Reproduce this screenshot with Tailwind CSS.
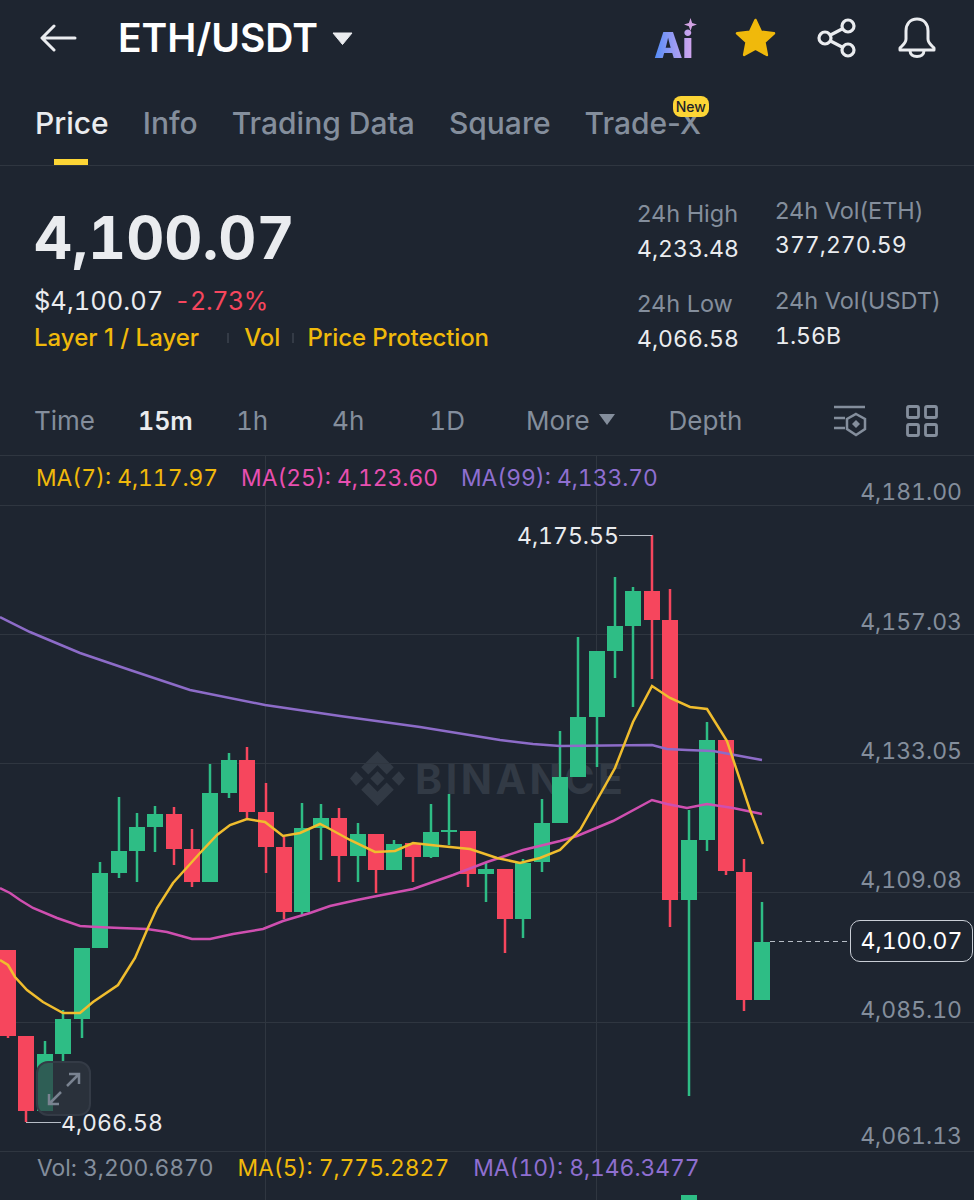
<!doctype html>
<html lang="en">
  <head>
    <meta charset="UTF-8" />
    <meta name="viewport" content="width=device-width, initial-scale=1.0" />
    <title>ETH/USDT</title>
    <script src="https://cdn.jsdelivr.net/npm/@tailwindcss/browser@4"></script>
  </head>
  <body class="bg-[#1e2530]">
    <div class="w-[974px] h-[1200px] overflow-hidden bg-[#1e2530] font-['Inter',sans-serif] text-[#848e9c]">
      <!-- top bar -->
      <header class="h-[75px] flex items-center pl-[40px] pr-[37px]">
        <svg class="w-[37px] h-[30px]" viewBox="0 0 37 30" fill="none" stroke="#eaecef" stroke-width="3" stroke-linecap="round" stroke-linejoin="round">
          <path d="M35 15H3M14 3L2 15l12 12" />
        </svg>
        <h1 class="ml-[41px] text-[39px] leading-[44px] font-semibold text-white tabular-nums">ETH/USDT</h1>
        <svg class="ml-[14px] mt-[1px] w-[21px] h-[13px]" viewBox="0 0 21 13" fill="#eaecef"><path d="M1 1h19l-9.500 11.500z" stroke="#eaecef" stroke-linejoin="round" /></svg>
        <div class="ml-auto relative w-[41px] h-[40px] mt-[6px]">
          <span class="absolute left-[-1px] bottom-0 text-[36px] leading-[32px] font-black bg-gradient-to-r from-[#4f8cf7] to-[#d4a5ee] bg-clip-text text-transparent">Ai</span>
          <svg class="absolute right-[-1px] top-[-3px] w-[13px] h-[13px]" viewBox="0 0 12 12" fill="#d3a3e4"><path d="M6 0l1.500 4.500L12 6 7.500 7.500 6 12 4.500 7.500 0 6l4.500-1.500z" /></svg>
        </div>
        <svg class="ml-[39px] w-[41px] h-[39px]" viewBox="0 0 41 39" fill="#f0b90b" stroke="#f0b90b" stroke-width="2.500" stroke-linejoin="round">
          <path d="M20.500 2l5.500 11.700 13 1.600-9.600 8.800 2.500 12.900-11.400-6.300-11.400 6.300 2.500-12.900-9.600-8.800 13-1.600z" />
        </svg>
        <svg class="ml-[41px] w-[40px] h-[40px]" viewBox="0 0 40 40" fill="none" stroke="#eaecef" stroke-width="3.200">
          <circle cx="31" cy="8" r="6" /><circle cx="8" cy="20" r="6" /><circle cx="31" cy="32" r="6" />
          <path d="M13.500 17L26 10.500M13.500 23L26 29.500" />
        </svg>
        <svg class="ml-[40px] w-[40px] h-[41px]" viewBox="0 0 40 41" fill="none" stroke="#eaecef" stroke-width="3" stroke-linecap="round" stroke-linejoin="round">
          <path d="M20 2c-7 0-11 5-11 12v8c0 4-3 6-6 9v2h34v-2c-3-3-6-5-6-9v-8c0-7-4-12-11-12z" />
          <path d="M13 33.500c0 4 3 6 7 6s7-2 7-6" />
        </svg>
      </header>

      <!-- tabs -->
      <nav class="h-[91px] border-b border-[#2f3640] pl-[35px] relative flex gap-[34px] pt-[29px] text-[30px] leading-[38px] font-medium text-[#848e9c]">
        <a class="text-[#eaecef]">Price</a>
        <a>Info</a>
        <a>Trading Data</a>
        <a>Square</a>
        <a class="relative">Trade-X
          <span class="absolute right-[-8px] top-[-8px] h-[21px] px-[3px] rounded-[8px] bg-[#fcd535] text-[#1e2329] text-[14px] leading-[21px]">New</span>
        </a>
        <span class="absolute left-[54px] bottom-0 w-[34px] h-[6px] bg-[#fcd535]"></span>
      </nav>

      <!-- price summary -->
      <section class="h-[219px] flex justify-between pl-[34px]">
        <div>
          <div class="mt-[38px] text-[59px] leading-[68px] font-bold text-[#eaecef] tabular-nums">4,100.07</div>
          <div class="mt-[14px] flex gap-[11px] text-[25.500px] leading-[30px] tabular-nums">
            <span class="text-[#eaecef]">$4,100.07</span>
            <span class="text-[#f6465d] text-[25px] tracking-[-0.4px]">-2.73%</span>
          </div>
          <div class="mt-[7px] flex items-center text-[24px] leading-[30px] font-medium text-[#f0b90b]">
            <span>Layer 1 / Layer</span>
            <span class="ml-[28px] mr-[15px] w-[2px] h-[10px] bg-[#343b46]"></span>
            <span>Vol</span>
            <span class="ml-[12px] mr-[13px] w-[2px] h-[10px] bg-[#343b46]"></span>
            <span class="tracking-[-0.1px]">Price Protection</span>
          </div>
        </div>
        <div class="w-[337px] flex text-[23.500px] leading-[30px]">
          <div class="w-[138px] pt-[33px]">
            <div>24h High</div>
            <div class="mt-[5px] text-[23px] text-[#eaecef] tabular-nums">4,233.48</div>
            <div class="mt-[25px]">24h Low</div>
            <div class="mt-[5px] text-[23px] text-[#eaecef] tabular-nums">4,066.58</div>
          </div>
          <div class="pt-[30px]">
            <div>24h Vol(ETH)</div>
            <div class="mt-[4px] text-[23px] text-[#eaecef] tabular-nums">377,270.59</div>
            <div class="mt-[26px]">24h Vol(USDT)</div>
            <div class="mt-[5px] text-[23px] text-[#eaecef] tabular-nums">1.56B</div>
          </div>
        </div>
      </section>

      <!-- intervals -->
      <div class="h-[70px] flex items-center pl-[34px] pt-[2px] text-[26px] leading-[32px] tabular-nums">
        <span>Time</span>
        <span class="ml-[43px] text-[25px] font-semibold text-[#eaecef]">15m</span>
        <span class="ml-[43px]">1h</span>
        <span class="ml-[64px]">4h</span>
        <span class="ml-[65px]">1D</span>
        <span class="ml-[61px]">More</span>
        <svg class="ml-[9px] mb-[3px] w-[16px] h-[11px]" viewBox="0 0 16 11" fill="#848e9c"><path d="M0 0h16l-8 11z" /></svg>
        <span class="ml-[54px]">Depth</span>
        <svg class="ml-[92px] w-[33px] h-[32px]" viewBox="0 0 33 32" fill="none" stroke="#848e9c" stroke-width="2.500">
          <path d="M0 2h31M0 13h11M0 23h11" />
          <path d="M22 9l9 5v10l-9 6-9-6V14z" />
          <path d="M22 15l4 4-4 4-4-4z" fill="#848e9c" stroke="none" />
        </svg>
        <svg class="ml-[39px] w-[32px] h-[32px]" viewBox="0 0 32 32" fill="none" stroke="#848e9c" stroke-width="2.800">
          <rect x="1.500" y="1.500" width="11" height="11" rx="1.500" /><rect x="19.500" y="1.500" width="11" height="11" rx="1.500" />
          <rect x="1.500" y="19.500" width="11" height="11" rx="1.500" /><rect x="19.500" y="19.500" width="11" height="11" rx="1.500" />
        </svg>
      </div>

      <!-- chart -->
      <div class="relative h-[745px] border-t border-[#2f3640] flex flex-col tabular-nums">
        <div class="absolute left-[350px] top-[295px] flex items-center gap-[10px]">
          <svg class="w-[55px] h-[55px]" viewBox="0 0 54 54" fill="#323a45">
            <path d="M27 0l16 16-7 7-9-9-9 9-7-7zM6 20l7 7-7 7-6-7zM48 20l6 7-6 7-7-7zM27 20l7 7-7 7-7-7zM11 38l7-7 9 9 9-9 7 7-16 16z" />
          </svg>
          <span class="text-[41px] leading-[50px] font-bold tracking-[3.500px] text-[#323a45]">BINANCE</span>
        </div>

        <svg id="chart" class="absolute left-0 top-0 w-[974px] h-[744px]" viewBox="0 456 974 744" fill="none"></svg>

        <!-- legend over the price pane -->
        <div class="relative h-[49px] flex items-center pl-[36px] pb-[4px] gap-[23px] text-[22.800px]">
          <span class="text-[#f0b90b]">MA(7): 4,117.97</span>
          <span class="text-[#e84fb0]">MA(25): 4,123.60</span>
          <span class="text-[#8f6fd0]">MA(99): 4,133.70</span>
        </div>
        <div class="relative flex-1"></div>
        <div class="relative h-[49px] flex items-center pl-[37px] pb-[14px] gap-[24px] text-[22.800px]">
          <span>Vol: 3,200.6870</span>
          <span class="text-[#f0b90b]">MA(5): 7,775.2827</span>
          <span class="text-[#8f6fd0]">MA(10): 8,146.3477</span>
        </div>

        <!-- price axis -->
        <span class="absolute right-[12px] top-[21px] text-[23px] leading-[30px]">4,181.00</span>
        <span class="absolute right-[12px] top-[151px] text-[23px] leading-[30px]">4,157.03</span>
        <span class="absolute right-[12px] top-[280px] text-[23px] leading-[30px]">4,133.05</span>
        <span class="absolute right-[12px] top-[409px] text-[23px] leading-[30px]">4,109.08</span>
        <span class="absolute right-[12px] top-[539px] text-[23px] leading-[30px]">4,085.10</span>
        <span class="absolute right-[12px] top-[665px] text-[23px] leading-[30px]">4,061.13</span>
        <span class="absolute left-[850px] top-[464px] w-[123px] h-[42px] rounded-[10px] border border-[#c9ced6] bg-[#1e2530] text-center text-[23px] leading-[40px] text-white">4,100.07</span>

        <!-- high / low marks -->
        <span class="absolute left-[517px] top-[65px] text-[23px] leading-[30px] text-[#eaecef]">4,175.55</span>
        <span class="absolute left-[61px] top-[652px] text-[23px] leading-[30px] text-[#eaecef]">4,066.58</span>

        <button class="absolute left-[36px] top-[605px] w-[55px] h-[55px] rounded-[12px] border-2 border-[#343b46] bg-[#2f3640]/70 flex items-center justify-center">
          <svg class="w-[34px] h-[34px]" viewBox="0 0 34 34" fill="none" stroke="#7a8391" stroke-width="2.500">
            <path d="M20 14L32 2M22 2h10v10M14 20L2 32M2 22v10h10" />
          </svg>
        </button>
      </div>
    </div>

    <script>
      // [center x, high, body top, body bottom, low, green?] in page pixels
      const candles = [
        [8, 950, 950, 1036, 1038, 0], [26, 1036, 1036, 1111, 1122, 0], [45, 1041, 1054, 1111, 1111, 1],
        [63, 1010, 1019, 1054, 1062, 1], [82, 948, 948, 1019, 1038, 1], [100, 862, 873, 948, 948, 1],
        [119, 797, 851, 873, 878, 1], [137, 813, 827, 851, 882, 1], [155, 806, 814, 827, 852, 1],
        [174, 807, 814, 849, 865, 0], [192, 829, 849, 882, 887, 0], [210, 764, 793, 882, 882, 1],
        [229, 753, 760, 793, 798, 1], [247, 747, 760, 812, 820, 0], [266, 783, 812, 847, 873, 0],
        [284, 837, 847, 912, 919, 0], [302, 803, 828, 912, 915, 1], [321, 804, 818, 828, 860, 1],
        [339, 808, 818, 856, 882, 0], [358, 823, 834, 856, 882, 1], [376, 834, 834, 870, 893, 0],
        [394, 840, 844, 870, 870, 1], [413, 843, 843, 857, 882, 0], [431, 804, 832, 857, 858, 1],
        [449, 794, 830, 832, 845, 1], [468, 831, 831, 874, 887, 0], [486, 863, 869, 874, 902, 1],
        [505, 869, 869, 919, 953, 0], [523, 859, 863, 919, 938, 1], [542, 799, 823, 862, 872, 1],
        [560, 731, 777, 823, 823, 1], [578, 637, 717, 777, 777, 1], [597, 651, 651, 717, 767, 1],
        [615, 577, 626, 651, 678, 1], [633, 587, 591, 626, 707, 1], [652, 535, 591, 620, 679, 0],
        [670, 589, 620, 900, 927, 0], [689, 810, 840, 900, 1096, 1], [707, 722, 740, 840, 851, 1],
        [726, 740, 740, 871, 875, 0], [744, 859, 872, 1000, 1011, 0], [762, 902, 942, 1000, 1000, 1],
      ];

      const ma7 = "0,960 8,965 15,977 27,990 43,1002 63,1013 80,1013 93,1002 118,985 135,958 147,930 157,908 173,883 200,853 217,835 230,825 247,819 265,822 283,836 300,833 320,824 330,829 350,840 375,852 395,851 413,843 440,846 470,849 497,858 520,863 540,858 560,850 580,830 615,768 633,722 652,686 670,698 690,707 707,709 727,741 750,810 763,844";
      const ma25 = "0,888 10,893 20,900 33,908 57,918 80,926 97,927 120,928 147,929 167,932 192,939 210,939 233,934 263,929 283,921 310,913 330,906 357,900 377,896 413,889 453,875 487,862 523,850 560,841 577,836 613,821 652,800 667,804 687,808 707,804 733,808 762,814";
      const ma99 = "0,617 30,632 80,653 130,670 190,690 265,705 340,716 420,727 500,740 533,744 560,746 652,745 667,749 687,750 713,751 762,760";

      let svg = "";
      for (const y of [505, 634, 763, 892, 1022, 1151]) svg += `<path d="M0 ${y + 0.5}H974" stroke="#2f3640" />`;
      for (const x of [265, 596]) svg += `<path d="M${x + 0.5} 456V1200" stroke="#2f3640" />`;

      for (const [x, high, top, bottom, low, up] of candles) {
        const color = up ? "#2ebd85" : "#f6465d";
        svg += `<path d="M${x} ${high}V${low}" stroke="${color}" stroke-width="2.500" />`;
        svg += `<rect x="${x - 8}" y="${top}" width="16" height="${bottom - top}" fill="${color}" />`;
      }

      svg += `<rect x="681" y="1195" width="16" height="5" fill="#2ebd85" />`;
      svg += `<polyline points="${ma99}" stroke="#8d6cc8" stroke-width="2.500" />`;
      svg += `<polyline points="${ma25}" stroke="#cf4fb0" stroke-width="2.500" />`;
      svg += `<polyline points="${ma7}" stroke="#f0bd2e" stroke-width="2.500" />`;
      svg += `<path d="M619 535.500H652M26 1122.500H61" stroke="#b7bdc6" />`;
      svg += `<path d="M770 941.500H850" stroke="#b7bdc6" stroke-dasharray="5 4" />`;
      document.getElementById("chart").innerHTML = svg;
    </script>
  </body>
</html>
